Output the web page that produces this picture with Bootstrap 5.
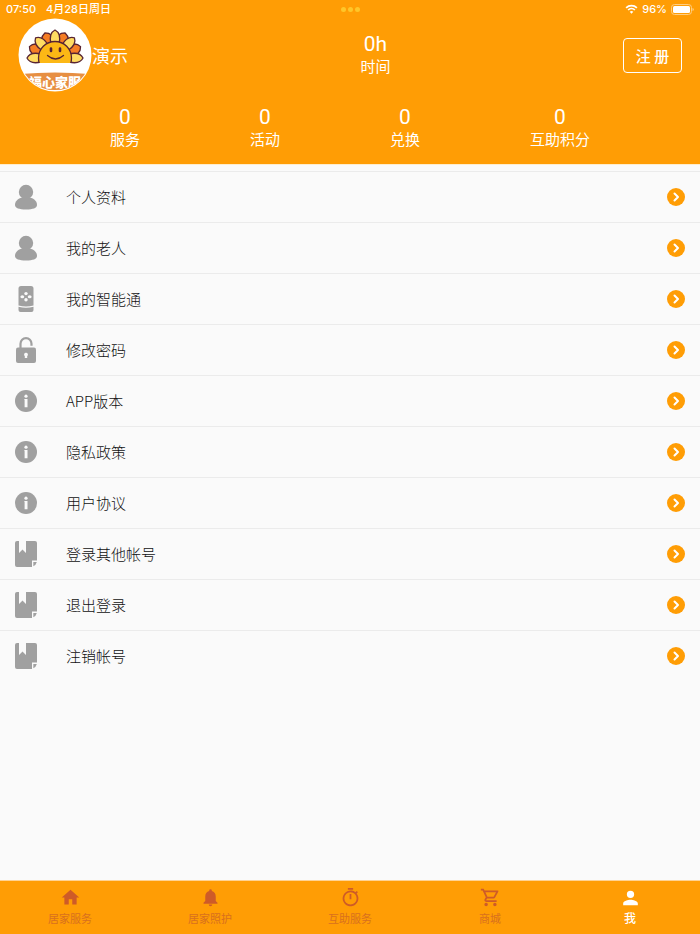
<!DOCTYPE html>
<html lang="zh-CN">
<head>
<meta charset="utf-8">
<meta name="viewport" content="width=device-width, initial-scale=1">
<title>我</title>
<link href="https://cdn.jsdelivr.net/npm/bootstrap@5.3.0/dist/css/bootstrap.min.css" rel="stylesheet">
<style>
  :root { --brand: #ff9d05; --rust: #ce5b28; }
  body { background: #fafafa; color: #111; font-family: "Noto Sans CJK SC", sans-serif; }
  .brand-bg { background: var(--brand); }
  .status { height: 18px; padding: 0 6px; font: 500 11px/18px Inter, "Noto Sans CJK SC", sans-serif; }
  .status .today { margin-left: 10px; }
  .status .dots { gap: 2px; }
  .status .dots i { width: 5px; height: 5px; border-radius: 50%; background: #ffc629; }
  .profile { padding: 0 18px; height: 74px; }
  .nickname { font-size: 18px; line-height: 24px; }
  .figure-box { font-size: 15px; line-height: 22px; text-align: center; }
  .figure-box b, .figure-box span { display: block; }
  .figure-box b { font-family: Roboto, sans-serif; font-weight: 400; font-size: 21px; line-height: 22px; }
  .stats { padding: 14px 0; }
  .register { width: 59px; height: 35px; border: 1px solid #fff; border-radius: 4px; color: #fff; font-size: 15px; font-weight: 500; line-height: 1; padding: 0; }
  .head { border-bottom: 1px solid #ffedcc; }
  .menu { margin-top: 6px; border-top: 1px solid #ebebeb; }
  .menu a { height: 51px; padding: 0 15px 0 14px; border-bottom: 1px solid #ebebeb; color: #111; font-size: 15px; font-weight: 300; }
  .menu a:last-child { border-bottom-color: transparent; }
  .menu .glyph { width: 24px; height: 28px; margin-right: 28px; fill: #a0a0a0; }
  .tabs { height: 54px; border-top: 1px solid #ffd394; }
  .tabs a { color: var(--rust); font-size: 11px; line-height: 16px; padding-top: 6px; }
  .tabs a span { color: #d8701f; margin-top: 2px; }
  .tabs svg { fill: currentColor; }
  .tabs a.active { color: #fff; }
  .tabs a.active span { color: #fff; font-size: 12px; font-weight: 500; margin-top: 1px; }
</style>
<script src="https://cdn.jsdelivr.net/npm/bootstrap@5.3.0/dist/js/bootstrap.bundle.min.js"></script>
</head>
<body class="min-vh-100 d-flex flex-column">
<svg class="d-none" aria-hidden="true">
  <symbol id="person" viewBox="0 0 24 28"><circle cx="12" cy="9" r="7.200"/><path d="M8 14.500h8c4 1 7 3.500 7 7.500 0 3-4 4.500-11 4.500S1 25 1 22c0-4 3-6.500 7-7.500z"/></symbol>
  <symbol id="device" viewBox="0 0 24 28"><path d="M7 1h10q2.500 0 2.500 2.500v17q-7.500 2-15 0v-17Q4.500 1 7 1zM4.500 21.800q7.500 2 15 0V25q0 2-2 2h-11q-2 0-2-2z"/><g fill="#fafafa"><circle cx="12" cy="8.600" r="1.700"/><circle cx="12" cy="14.800" r="1.700"/><ellipse cx="8.300" cy="11.700" rx="1.900" ry="1.500"/><ellipse cx="15.700" cy="11.700" rx="1.900" ry="1.500"/></g></symbol>
  <symbol id="lock" viewBox="0 0 24 28"><path d="M6.500 12V7.700a5.500 5.500 0 0 1 11 0v2" fill="none" stroke="#a0a0a0" stroke-width="2.200"/><rect x="2" y="11.500" width="20" height="15.500" rx="2"/><path d="M12 16.700a1.900 1.900 0 0 1 1.200 3.400V22h-2.400v-1.900a1.900 1.900 0 0 1 1.200-3.400z" fill="#fafafa"/></symbol>
  <symbol id="info" viewBox="0 0 24 28"><circle cx="12" cy="14" r="11"/><g fill="#fafafa"><circle cx="12" cy="9.200" r="1.600"/><path d="M10.300 12h3.200v8.200h-2.900v-7.400h-.3z"/></g></symbol>
  <symbol id="book" viewBox="0 0 24 28"><path d="M3 1h2v12l3.500-3.500L12 13V1h9q2 0 2 2v17.500h-5V27H3q-2 0-2-2V3q0-2 2-2z"/><path d="M19.300 22h3.500q-.8 3-3.500 4.300z"/></symbol>
  <symbol id="go" viewBox="0 0 18 18"><circle cx="9" cy="9" r="9" fill="#ff9d05"/><path d="M7.500 5.500 11 9l-3.500 3.500" fill="none" stroke="#fff" stroke-width="2" stroke-linecap="round" stroke-linejoin="round"/></symbol>
</svg>

<header class="head brand-bg text-white">
  <div class="status row g-0">
    <div class="col d-flex"><span>07:50</span><span class="today">4月28日周日</span></div>
    <div class="col-auto d-flex align-items-center dots"><i></i><i></i><i></i></div>
    <div class="col d-flex justify-content-end align-items-center">
      <svg class="me-1" width="13" height="10" viewBox="0 0 12 10" fill="none" stroke="#fff" stroke-width="1.700"><path d="M.6 3.800a7.700 7.700 0 0 1 10.800 0M2.600 6a4.900 4.900 0 0 1 6.800 0"/><path d="M6 9.700 4.200 7.800a2.600 2.600 0 0 1 3.600 0z" fill="#fff" stroke="none"/></svg>
      <span>96%</span>
      <svg class="ms-1" width="23" height="11" viewBox="0 0 23 11"><rect x=".5" y=".5" width="20" height="10" rx="3" fill="none" stroke="#ffce82"/><rect x="2" y="2" width="17" height="7" rx="1.500" fill="#fff"/><path d="M21.500 4q1.300.3 1.300 1.500T21.500 7z" fill="#ffce82"/></svg>
    </div>
  </div>
  <div class="profile d-flex align-items-center justify-content-between">
    <div class="d-flex align-items-center">
      <svg width="74" height="74" viewBox="0 0 74 74" role="img" aria-label="头像">
        <defs><clipPath id="round"><circle cx="37" cy="37" r="35.500"/></clipPath><clipPath id="half"><path d="M0 0h74v45H0z"/></clipPath></defs>
        <circle cx="37" cy="37" r="36.500" fill="#fff"/>
        <g stroke="#572333" stroke-width="1.300" stroke-linejoin="round">
          <g fill="#f57d25">
            <path transform="translate(37 40) rotate(-66)" d="M-5-14C-7-22-5-26 0-28 5-26 7-22 5-14z"/>
            <path transform="translate(37 40) rotate(-22)" d="M-5-14C-7-22-5-25 0-27 5-25 7-22 5-14z"/>
            <path transform="translate(37 40) rotate(22)" d="M-5-14C-7-22-5-25 0-27 5-25 7-22 5-14z"/>
            <path transform="translate(37 40) rotate(66)" d="M-5-14C-7-22-5-26 0-28 5-26 7-22 5-14z"/>
          </g>
          <g fill="#ffdc62">
            <path transform="translate(37 40) rotate(-90)" d="M-4-14C-6-22-4-26 0-28 4-26 6-22 4-14z"/>
            <path transform="translate(37 40) rotate(-44)" d="M-4-14C-6-22-4-26 0-28 4-26 6-22 4-14z"/>
            <path transform="translate(37 40)" d="M-4-14C-6-22-4-26 0-28 4-26 6-22 4-14z"/>
            <path transform="translate(37 40) rotate(44)" d="M-4-14C-6-22-4-26 0-28 4-26 6-22 4-14z"/>
            <path transform="translate(37 40) rotate(90)" d="M-4-14C-6-22-4-26 0-28 4-26 6-22 4-14z"/>
          </g>
          <circle cx="37" cy="40" r="16.500" fill="#fcb815" clip-path="url(#half)"/>
        </g>
        <g fill="none" stroke="#572333" stroke-linecap="round"><path d="M33 30.500v2.500M42 30.500v2.500" stroke-width="2.600"/><path d="M29.500 37.500q8 7 16 0" stroke-width="1.300"/></g>
        <g clip-path="url(#round)"><path d="M2 56q35-3 70 0v10q-18 6-35 6T2 66z" fill="#e78f42"/>
        <text x="37" y="69" text-anchor="middle" font-size="13" font-weight="900" fill="#fff">福心家服</text></g>
      </svg>
      <span class="nickname">演示</span>
    </div>
    <div class="figure-box"><b>0h</b><span>时间</span></div>
    <button type="button" class="btn register">注 册</button>
  </div>
  <div class="stats d-flex justify-content-evenly">
    <div class="figure-box"><b>0</b><span>服务</span></div>
    <div class="figure-box"><b>0</b><span>活动</span></div>
    <div class="figure-box"><b>0</b><span>兑换</span></div>
    <div class="figure-box"><b>0</b><span>互助积分</span></div>
  </div>
</header>

<main class="flex-grow-1">
  <nav class="menu" aria-label="个人中心">
    <a href="#" class="d-flex align-items-center text-decoration-none"><svg class="glyph"><use href="#person"/></svg><span class="flex-grow-1">个人资料</span><svg width="18" height="18"><use href="#go"/></svg></a>
    <a href="#" class="d-flex align-items-center text-decoration-none"><svg class="glyph"><use href="#person"/></svg><span class="flex-grow-1">我的老人</span><svg width="18" height="18"><use href="#go"/></svg></a>
    <a href="#" class="d-flex align-items-center text-decoration-none"><svg class="glyph"><use href="#device"/></svg><span class="flex-grow-1">我的智能通</span><svg width="18" height="18"><use href="#go"/></svg></a>
    <a href="#" class="d-flex align-items-center text-decoration-none"><svg class="glyph"><use href="#lock"/></svg><span class="flex-grow-1">修改密码</span><svg width="18" height="18"><use href="#go"/></svg></a>
    <a href="#" class="d-flex align-items-center text-decoration-none"><svg class="glyph"><use href="#info"/></svg><span class="flex-grow-1">APP版本</span><svg width="18" height="18"><use href="#go"/></svg></a>
    <a href="#" class="d-flex align-items-center text-decoration-none"><svg class="glyph"><use href="#info"/></svg><span class="flex-grow-1">隐私政策</span><svg width="18" height="18"><use href="#go"/></svg></a>
    <a href="#" class="d-flex align-items-center text-decoration-none"><svg class="glyph"><use href="#info"/></svg><span class="flex-grow-1">用户协议</span><svg width="18" height="18"><use href="#go"/></svg></a>
    <a href="#" class="d-flex align-items-center text-decoration-none"><svg class="glyph"><use href="#book"/></svg><span class="flex-grow-1">登录其他帐号</span><svg width="18" height="18"><use href="#go"/></svg></a>
    <a href="#" class="d-flex align-items-center text-decoration-none"><svg class="glyph"><use href="#book"/></svg><span class="flex-grow-1">退出登录</span><svg width="18" height="18"><use href="#go"/></svg></a>
    <a href="#" class="d-flex align-items-center text-decoration-none"><svg class="glyph"><use href="#book"/></svg><span class="flex-grow-1">注销帐号</span><svg width="18" height="18"><use href="#go"/></svg></a>
  </nav>
</main>

<nav class="tabs brand-bg d-flex sticky-bottom" aria-label="主导航">
  <a href="#" class="col d-flex flex-column align-items-center text-decoration-none"><svg width="21" height="21" viewBox="0 0 24 24"><path d="M10 20v-6h4v6h5v-8h3L12 3 2 12h3v8z"/></svg><span>居家服务</span></a>
  <a href="#" class="col d-flex flex-column align-items-center text-decoration-none"><svg width="21" height="21" viewBox="0 0 24 24"><path d="M12 22c1.100 0 2-.9 2-2h-4a2 2 0 0 0 2 2zm6-6v-5c0-3.070-1.640-5.640-4.500-6.320V4a1.500 1.500 0 0 0-3 0v.68C7.630 5.360 6 7.920 6 11v5l-2 2v1h16v-1z"/></svg><span>居家照护</span></a>
  <a href="#" class="col d-flex flex-column align-items-center text-decoration-none"><svg width="21" height="21" viewBox="0 0 24 24"><path d="M15 1H9v2h6zm-4 13h2V8h-2zm8.030-6.610 1.420-1.420a11 11 0 0 0-1.410-1.410l-1.420 1.420A9 9 0 1 0 19.030 7.390zM12 20a7 7 0 1 1 0-14 7 7 0 0 1 0 14z"/></svg><span>互助服务</span></a>
  <a href="#" class="col d-flex flex-column align-items-center text-decoration-none"><svg width="21" height="21" viewBox="0 0 24 24"><path d="M15.550 13c.75 0 1.410-.41 1.750-1.030l3.580-6.490A1 1 0 0 0 20.010 4H5.210l-.94-2H1v2h2l3.600 7.590-1.350 2.440C4.520 15.370 5.480 17 7 17h12v-2H7l1.100-2zM6.160 6h12.150l-2.760 5H8.530zM7 18a2 2 0 1 0 0 4 2 2 0 0 0 0-4zm10 0a2 2 0 1 0 0 4 2 2 0 0 0 0-4z"/></svg><span>商城</span></a>
  <a href="#" class="col d-flex flex-column align-items-center text-decoration-none active" aria-current="page"><svg width="23" height="22" viewBox="0 0 24 24"><path d="M12 12a4 4 0 1 0 0-8 4 4 0 0 0 0 8zm0 2c-2.670 0-8 1.340-8 4v2h16v-2c0-2.660-5.330-4-8-4z"/></svg><span>我</span></a>
</nav>
</body>
</html>
